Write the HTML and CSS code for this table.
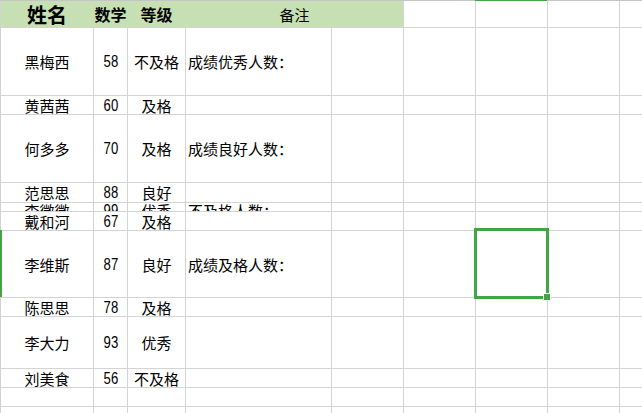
FILE: index.html
```html
<!DOCTYPE html>
<html lang="zh-CN">
<head>
<meta charset="utf-8">
<title>成绩表</title>
<link rel="stylesheet" href="styles.css">
</head>
<body>
<div class="sheet">
  <div class="col-mark"></div>
  <div class="row-mark"></div>

  <div class="row h27 header">
    <div class="cell ca hname">姓名</div>
    <div class="cell cb hbold">数学</div>
    <div class="cell cc hbold">等级</div>
    <div class="cell cde hnote">备注</div>
    <div class="cell"></div><div class="cell"></div><div class="cell"></div><div class="cell last"></div>
  </div>

  <div class="row h68">
    <div class="cell ca">黑梅西</div><div class="cell cb num"><span>58</span></div><div class="cell cc">不及格</div>
    <div class="cell cd">成绩优秀人数：</div><div class="cell"></div><div class="cell"></div><div class="cell"></div><div class="cell"></div><div class="cell last"></div>
  </div>
  <div class="row h19">
    <div class="cell ca">黄茜茜</div><div class="cell cb num"><span>60</span></div><div class="cell cc">及格</div>
    <div class="cell cd"></div><div class="cell"></div><div class="cell"></div><div class="cell"></div><div class="cell"></div><div class="cell last"></div>
  </div>
  <div class="row h68">
    <div class="cell ca">何多多</div><div class="cell cb num"><span>70</span></div><div class="cell cc">及格</div>
    <div class="cell cd">成绩良好人数：</div><div class="cell"></div><div class="cell"></div><div class="cell"></div><div class="cell"></div><div class="cell last"></div>
  </div>
  <div class="row h20">
    <div class="cell ca">范思思</div><div class="cell cb num"><span>88</span></div><div class="cell cc">良好</div>
    <div class="cell cd"></div><div class="cell"></div><div class="cell"></div><div class="cell"></div><div class="cell"></div><div class="cell last"></div>
  </div>
  <div class="row h9 clip">
    <div class="cell ca">李微微</div><div class="cell cb num"><span>99</span></div><div class="cell cc">优秀</div>
    <div class="cell cd">不及格人数：</div><div class="cell"></div><div class="cell"></div><div class="cell"></div><div class="cell"></div><div class="cell last"></div>
  </div>
  <div class="row h19">
    <div class="cell ca">戴和河</div><div class="cell cb num"><span>67</span></div><div class="cell cc">及格</div>
    <div class="cell cd"></div><div class="cell"></div><div class="cell"></div><div class="cell"></div><div class="cell"></div><div class="cell last"></div>
  </div>
  <div class="row h67">
    <div class="cell ca">李维斯</div><div class="cell cb num"><span>87</span></div><div class="cell cc">良好</div>
    <div class="cell cd">成绩及格人数：</div><div class="cell"></div><div class="cell"></div>
    <div class="cell active"><div class="selection"><span class="handle"></span></div></div>
    <div class="cell"></div><div class="cell last"></div>
  </div>
  <div class="row h19">
    <div class="cell ca">陈思思</div><div class="cell cb num"><span>78</span></div><div class="cell cc">及格</div>
    <div class="cell cd"></div><div class="cell"></div><div class="cell"></div><div class="cell"></div><div class="cell"></div><div class="cell last"></div>
  </div>
  <div class="row h52">
    <div class="cell ca">李大力</div><div class="cell cb num"><span>93</span></div><div class="cell cc">优秀</div>
    <div class="cell cd"></div><div class="cell"></div><div class="cell"></div><div class="cell"></div><div class="cell"></div><div class="cell last"></div>
  </div>
  <div class="row h19">
    <div class="cell ca">刘美食</div><div class="cell cb num"><span>56</span></div><div class="cell cc">不及格</div>
    <div class="cell cd"></div><div class="cell"></div><div class="cell"></div><div class="cell"></div><div class="cell"></div><div class="cell last"></div>
  </div>
  <div class="row h19">
    <div class="cell ca"></div><div class="cell cb"></div><div class="cell cc"></div>
    <div class="cell cd"></div><div class="cell"></div><div class="cell"></div><div class="cell"></div><div class="cell"></div><div class="cell last"></div>
  </div>
  <div class="row h19">
    <div class="cell ca"></div><div class="cell cb"></div><div class="cell cc"></div>
    <div class="cell cd"></div><div class="cell"></div><div class="cell"></div><div class="cell"></div><div class="cell"></div><div class="cell last"></div>
  </div>
</div>
</body>
</html>
```

FILE: styles.css
```css
html, body {
  margin: 0;
  padding: 0;
  background: #ffffff;
  overflow: hidden;
}

body {
  width: 642px;
  height: 413px;
  font-family: "SimSun", "Noto Sans CJK SC", sans-serif;
  font-size: 15px;
  color: #000000;
}

.sheet {
  position: relative;
  border-top: 1px solid #c4c4c4;
  border-left: 1px solid #d2d2d2;
  width: 641px;
}

.row {
  display: grid;
  grid-template-columns: 93px 34px 58px 146px 72px 72px 72px 72px 22px;
}

.h27 { height: 27px; }
.h68 { height: 68px; }
.h67 { height: 67px; }
.h52 { height: 52px; }
.h20 { height: 20px; }
.h19 { height: 19px; }
.h9  { height: 9px; }

.cell {
  box-sizing: border-box;
  border-right: 1px solid #d4d4d4;
  border-bottom: 1px solid #d4d4d4;
  display: flex;
  align-items: center;
  justify-content: center;
  line-height: 15px;
  white-space: nowrap;
  overflow: hidden;
  position: relative;
}

.cell.last {
  border-right: none;
}

.row .cell.cd {
  justify-content: flex-start;
  padding-left: 2px;
}

.num span {
  display: inline-block;
  font-family: "Liberation Sans", "Noto Sans CJK SC", sans-serif;
  font-size: 16px;
  line-height: 15px;
  transform: scaleX(0.82);
}

.clip .cell {
  align-items: flex-start;
}

.header .ca,
.header .cb,
.header .cc {
  background: #c6e0b4;
  border-right-color: transparent;
}

.header .cde {
  grid-column: span 2;
  background: #c6e0b4;
}

.hname {
  font-size: 20px;
  font-weight: 700;
  line-height: 22px;
  padding-top: 2px;
}

.hbold {
  font-size: 16px;
  font-weight: 700;
}

.hnote {
  font-size: 15px;
}

/* active cell */
.cell.active {
  overflow: visible;
  z-index: 2;
}

.selection {
  position: absolute;
  left: -2px;
  top: -3px;
  width: 75px;
  height: 71px;
  box-sizing: border-box;
  border: 3px solid #42a545;
}

.handle {
  position: absolute;
  right: -5px;
  bottom: -5px;
  width: 6px;
  height: 6px;
  background: #42a545;
  border: 1px solid #ffffff;
}

.col-mark {
  position: absolute;
  left: 474px;
  top: -1px;
  width: 72px;
  height: 1px;
  background: #42a545;
  z-index: 3;
}

.row-mark {
  position: absolute;
  left: -1px;
  top: 229px;
  width: 2px;
  height: 67px;
  background: #42a545;
  z-index: 3;
}
```
